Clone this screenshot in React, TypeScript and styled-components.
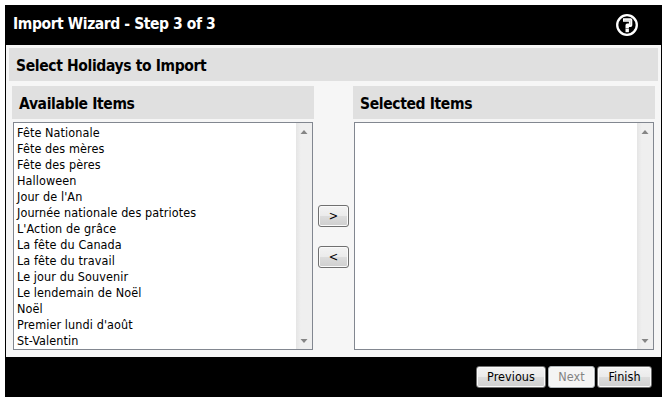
import React from "react";
import styled, { createGlobalStyle } from "styled-components";

const GlobalStyle = createGlobalStyle`
  *, *::before, *::after { box-sizing: border-box; }
  body {
    margin: 0;
    background: #fff;
    color: #000;
    font-family: "DejaVu Sans Condensed", "DejaVu Sans", sans-serif;
    font-stretch: condensed;
    font-size: 12.5px;
    overflow: hidden;
  }
`;

const Page = styled.div`
  width: 672px;
  height: 404px;
  padding: 5px 10px 7px 5px;
`;

const Wizard = styled.main`
  display: flex;
  flex-direction: column;
  width: 657px;
  height: 392px;
  background: #f6f6f6;
  border: 1px solid #000;
  border-width: 0 1px;
`;

const Header = styled.header`
  display: flex;
  align-items: center;
  justify-content: space-between;
  height: 40px;
  padding: 0 23px 0 7px;
  background: #000;
  color: #fff;
`;

const Title = styled.h1`
  margin: 0 0 3px;
  font-size: 15.5px;
  line-height: 20px;
  font-weight: bold;
  letter-spacing: -0.41px;
  white-space: nowrap;
`;

const HelpButton = styled.button`
  width: 22px;
  height: 22px;
  padding: 0;
  border: 0;
  background: none;
  svg { display: block; }
`;

const Content = styled.section`
  flex: 1;
  padding: 3px 3px 0;
`;

const Heading = styled.h2`
  height: 33px;
  margin: 0;
  padding: 2px 7px 0;
  background: #e0e0e0;
  font-size: 15.5px;
  line-height: 33px;
  font-weight: bold;
  letter-spacing: -0.36px;
  white-space: nowrap;
`;

const Picker = styled.div`
  display: grid;
  grid-template-columns: 302px 39px 302px;
  padding: 5px 3px 0;
`;

const Column = styled.div`
  display: flex;
  flex-direction: column;
  gap: 3px;
`;

const ListBox = styled.div`
  display: flex;
  width: 300px;
  height: 228px;
  margin-left: 1px;
  border: 1px solid #828790;
  background: #fff;
`;

const Items = styled.ul`
  flex: 1;
  margin: 0;
  padding: 2px 3px;
  list-style: none;
`;

const Item = styled.li`
  height: 16px;
  line-height: 16px;
  letter-spacing: 0.1px;
  white-space: nowrap;
`;

const Scrollbar = styled.div`
  display: flex;
  flex-direction: column;
  justify-content: space-between;
  width: 16px;
  padding: 7px 0 6px 4px;
  background: linear-gradient(90deg, #e5e5e5, #efefef 30%, #efefef);
  svg { display: block; }
`;

const Transfer = styled.div`
  display: flex;
  flex-direction: column;
  align-items: center;
  gap: 19px;
  padding-top: 119px;
`;

const Button = styled.button<{ $width: number }>`
  width: ${(p) => p.$width}px;
  height: 22px;
  padding: 0;
  border: 1px solid #707070;
  border-radius: 3px;
  box-shadow: inset 0 0 0 1px #fafafa;
  background: linear-gradient(#f3f3f3, #ebebeb 48%, #dcdcdc 52%, #cfcfcf);
  color: #000;
  font: inherit;
  line-height: 20px;
  letter-spacing: 0.05px;
  &:disabled {
    border-color: #adb2b5;
    background: #f4f4f4;
    color: #838383;
  }
`;

const Footer = styled.footer`
  display: flex;
  justify-content: flex-end;
  gap: 2px;
  height: 40px;
  padding: 9px 9px 0 0;
  background: #000;
`;

const holidays = [
  "Fête Nationale",
  "Fête des mères",
  "Fête des pères",
  "Halloween",
  "Jour de l'An",
  "Journée nationale des patriotes",
  "L'Action de grâce",
  "La fête du Canada",
  "La fête du travail",
  "Le jour du Souvenir",
  "Le lendemain de Noël",
  "Noël",
  "Premier lundi d'août",
  "St-Valentin",
];

function HelpIcon() {
  return (
    <svg width="22" height="22" viewBox="0 0 22 22" fill="none">
      <circle cx="11" cy="11" r="9.8" stroke="#fff" strokeWidth="2.3" />
      <path d="M7 6h7.6v5.2h-3.4v3" stroke="#fff" strokeWidth="3.4" strokeLinejoin="round" />
      <path d="M9.5 14h3.4v1h-3.4z" fill="#8a8a8a" />
      <path d="M9.5 15h3.4v3.2h-3.4z" fill="#fff" />
      <path d="M8 6.2h6.4v4.8" stroke="#c4c4c4" strokeWidth="0.8" />
    </svg>
  );
}

function Arrow({ down = false }: { down?: boolean }) {
  return (
    <svg width="8" height="4" viewBox="0 0 8 4">
      <path d={down ? "M.5 0h7L4 4z" : "M.5 4h7L4 0z"} fill="#858585" />
    </svg>
  );
}

function ItemPanel({ title, items }: { title: string; items: string[] }) {
  return (
    <Column>
      <Heading>{title}</Heading>
      <ListBox>
        <Items>
          {items.map((item) => (
            <Item key={item}>{item}</Item>
          ))}
        </Items>
        <Scrollbar>
          <Arrow />
          <Arrow down />
        </Scrollbar>
      </ListBox>
    </Column>
  );
}

export default function App() {
  return (
    <Page>
      <GlobalStyle />
      <Wizard>
        <Header>
          <Title>Import Wizard - Step 3 of 3</Title>
          <HelpButton aria-label="Help">
            <HelpIcon />
          </HelpButton>
        </Header>
        <Content>
          <Heading>Select Holidays to Import</Heading>
          <Picker>
            <ItemPanel title="Available Items" items={holidays} />
            <Transfer>
              <Button $width={31}>&gt;</Button>
              <Button $width={31}>&lt;</Button>
            </Transfer>
            <ItemPanel title="Selected Items" items={[]} />
          </Picker>
        </Content>
        <Footer>
          <Button $width={70}>Previous</Button>
          <Button $width={47} disabled>
            Next
          </Button>
          <Button $width={55}>Finish</Button>
        </Footer>
      </Wizard>
    </Page>
  );
}
